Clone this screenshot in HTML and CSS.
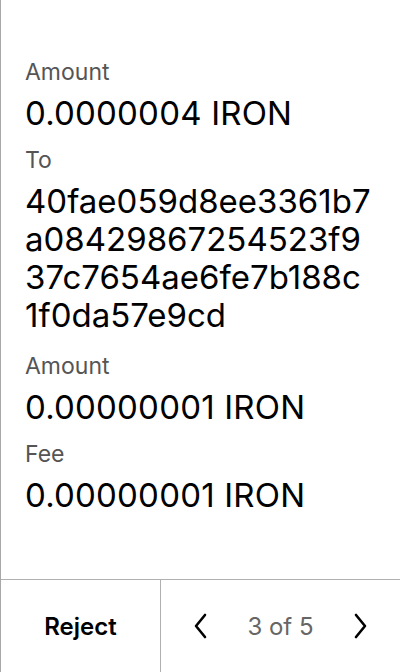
FILE: index.html
```html
<!DOCTYPE html>
<html>
<head>
<meta charset="utf-8">
<link rel="stylesheet" href="styles.css">
</head>
<body>
<div class="screen">
  <div class="content">
    <div class="label">Amount</div>
    <div class="value">0.0000004 IRON</div>
    <div class="label">To</div>
    <div class="value value-long">40fae059d8ee3361b7<br>a08429867254523f9<br>37c7654ae6fe7b188c<br>1f0da57e9cd</div>
    <div class="label">Amount</div>
    <div class="value">0.00000001 IRON</div>
    <div class="label">Fee</div>
    <div class="value">0.00000001 IRON</div>
  </div>
  <div class="footer">
    <div class="reject">Reject</div>
    <div class="pager">
      <svg class="chev" width="20" height="28" viewBox="0 0 20 28"><path d="M14 3 L5 14 L14 25" fill="none" stroke="#000" stroke-width="2.6" stroke-linecap="round" stroke-linejoin="round"/></svg>
      <span class="count">3 of 5</span>
      <svg class="chev" width="20" height="28" viewBox="0 0 20 28"><path d="M6 3 L15 14 L6 25" fill="none" stroke="#000" stroke-width="2.6" stroke-linecap="round" stroke-linejoin="round"/></svg>
    </div>
  </div>
</div>
</body>
</html>
```
FILE: styles.css
```css
html, body { margin: 0; padding: 0; background: #fff; }
body { font-family: Inter, "Noto Sans", sans-serif; color: #000; }
.screen {
  width: 400px; height: 672px; box-sizing: border-box;
  border-left: 1px solid #a8a8a8;
  display: flex; flex-direction: column;
}
.content { flex: 1; padding: 57px 0 0 24px; }
.label { font-size: 23px; line-height: 30px; color: #555; margin-bottom: 7px; }
.value { font-size: 33px; line-height: 38px; margin-bottom: 13px; letter-spacing: 0.2px; }
.value-long { margin-top: 1px; margin-bottom: 17px; letter-spacing: 0; }
.footer {
  height: 92px; border-top: 1px solid #b0b0b0;
  display: flex;
}
.reject {
  width: 159px; border-right: 1px solid #b0b0b0;
  display: flex; align-items: center; justify-content: center;
  font-size: 24px; font-weight: 600;
}
.pager {
  flex: 1; display: flex; align-items: center; justify-content: space-between;
  padding: 0 30px;
}
.count { font-size: 24px; color: #666; }
```
